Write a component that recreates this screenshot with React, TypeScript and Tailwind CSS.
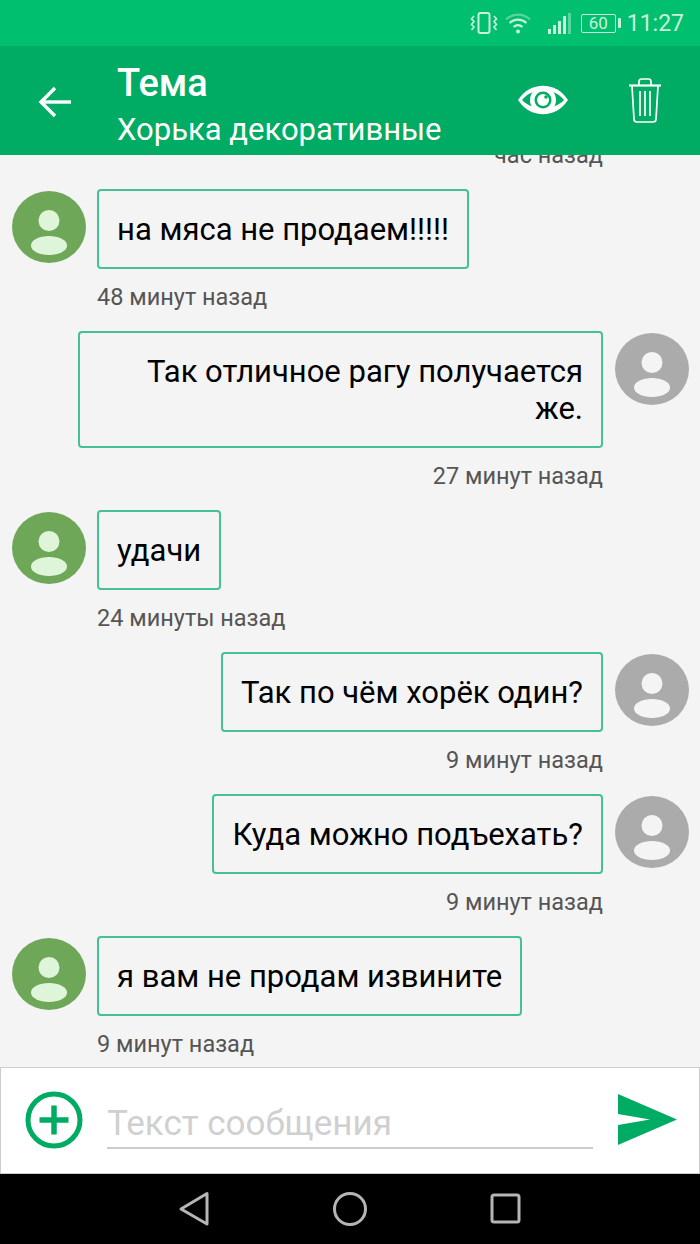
import React from "react";

type Msg = { text: string; time: string; mine?: boolean; wide?: boolean };

const messages: Msg[] = [
  { text: "на мяса не продаем!!!!!", time: "48 минут назад" },
  { text: "Так отличное рагу получается же.", time: "27 минут назад", mine: true, wide: true },
  { text: "удачи", time: "24 минуты назад" },
  { text: "Так по чём хорёк один?", time: "9 минут назад", mine: true },
  { text: "Куда можно подъехать?", time: "9 минут назад", mine: true },
  { text: "я вам не продам извините", time: "9 минут назад" },
];

function Avatar({ mine }: { mine?: boolean }) {
  return (
    <svg width="74" height="72" viewBox="0 0 74 72" className="shrink-0 mt-[2px]">
      <ellipse cx="37" cy="36" rx="37" ry="36" fill={mine ? "#ababab" : "#6fa759"} />
      <circle cx="37" cy="29.5" r="10.5" fill={mine ? "#f4f4f4" : "#dff5da"} />
      <ellipse cx="37" cy="54.5" rx="18" ry="9.5" fill={mine ? "#f4f4f4" : "#dff5da"} />
    </svg>
  );
}

function Message({ msg }: { msg: Msg }) {
  const bubble = (
    <div
      className={`border-2 border-[#45c195] rounded-[4px] px-[18px] pt-[20px] pb-[19px] text-[31px] leading-[37px] text-black ${
        msg.wide ? "w-[525px] text-right" : ""
      }`}
    >
      {msg.text}
    </div>
  );
  if (msg.mine) {
    return (
      <div className="mb-[20px]">
        <div className="flex justify-end pr-[11px] gap-[12px]">
          {bubble}
          <Avatar mine />
        </div>
        <div className="mt-[14px] pr-[97px] text-right text-[23.5px] leading-[28px] text-[#555555]">{msg.time}</div>
      </div>
    );
  }
  return (
    <div className="mb-[20px]">
      <div className="flex pl-[12px] gap-[11px]">
        <Avatar />
        {bubble}
      </div>
      <div className="mt-[14px] pl-[97px] text-[23.5px] leading-[28px] text-[#555555]">{msg.time}</div>
    </div>
  );
}

function StatusBar() {
  const c = "#c9f0dc";
  return (
    <div className="h-[46px] bg-[#00bf6f] flex items-center justify-end pr-[16px] shrink-0">
      <svg width="28" height="22" viewBox="0 0 28 22" fill="none" stroke={c} strokeWidth="1.6" className="mr-[7px]">
        <rect x="8.5" y="1" width="11" height="20" rx="2" strokeWidth="2" />
        <path d="M4 4 L1.5 7 L4 9.5 L1.5 12.5 L4 15 L1.5 18" />
        <path d="M24 4 L26.5 7 L24 9.5 L26.5 12.5 L24 15 L26.5 18" />
      </svg>
      <svg width="26" height="21" viewBox="0 0 26 21" fill="none" stroke={c} strokeWidth="2.2" className="mr-[17px]">
        <path d="M1 6.5 C8 0 18 0 25 6.5" strokeOpacity="0.45" />
        <path d="M4.5 10 C9.5 5.5 16.5 5.5 21.5 10" />
        <path d="M8.5 14 C11.5 11.5 14.5 11.5 17.5 14" />
        <circle cx="13" cy="18.5" r="2" fill={c} stroke="none" />
      </svg>
      <svg width="23" height="21" viewBox="0 0 23 21" fill={c} className="mr-[10px]">
        <rect x="0" y="16" width="3" height="5" />
        <rect x="5" y="12" width="3" height="9" />
        <rect x="10" y="8" width="3" height="13" />
        <rect x="15" y="3" width="3" height="18" />
        <rect x="20" y="0" width="3" height="21" opacity="0.45" />
      </svg>
      <div className="w-[35px] h-[19px] border border-[#c9f0dc] rounded-[2px] flex items-center justify-center text-[17px] leading-none text-[#c9f0dc]">
        60
      </div>
      <div className="w-[3px] h-[10px] bg-[#c9f0dc] ml-[2px] mr-[6px] rounded-[1px]" />
      <div className="text-[23px] leading-none text-[#c9f0dc]">11:27</div>
    </div>
  );
}

function Header() {
  return (
    <div className="h-[109px] bg-[#00ab63] flex items-center shrink-0 pl-[38px] pr-[38px] text-white relative z-10">
      <svg width="34" height="32" viewBox="0 0 34 32" fill="none" stroke="white" strokeWidth="3.4" className="mt-[2px]">
        <path d="M33 16 H3" />
        <path d="M17 2 L3 16 L17 30" />
      </svg>
      <div className="ml-[45px] flex-1 mt-[3px]">
        <div className="text-[38px] leading-[44px] font-medium">Тема</div>
        <div className="text-[31px] leading-[38px] mt-[6px] mb-[-6px]">Хорька декоративные</div>
      </div>
      <svg width="50" height="30" viewBox="0 0 50 30" className="mt-[-1px] mr-[60px]">
        <path d="M0 15 C12 -4 38 -4 50 15 C38 34 12 34 0 15 Z" fill="white" />
        <path d="M4 15 C14 2 36 2 46 15 C36 26 14 26 4 15 Z" fill="#00ab63" />
        <circle cx="25" cy="15" r="13" fill="white" />
        <circle cx="25" cy="15" r="8.5" fill="#00ab63" />
        <circle cx="25" cy="15" r="6" fill="white" />
        <circle cx="28" cy="12" r="1.8" fill="#00ab63" />
      </svg>
      <svg width="34" height="45" viewBox="0 0 34 45" fill="none" stroke="white" strokeWidth="1.7" className="mt-[-1px]">
        <path d="M1 7.5 H33" strokeWidth="2.2" />
        <path d="M11 7 V3.5 C11 2 12 1 13.5 1 H20.5 C22 1 23 2 23 3.5 V7" />
        <path d="M4 8 L6 41 C6 43 7 44 9 44 H25 C27 44 28 43 28 41 L30 8" />
        <path d="M12 13 V38" />
        <path d="M17 13 V38" />
        <path d="M22 13 V38" />
      </svg>
    </div>
  );
}

function InputBar() {
  return (
    <div className="h-[107px] shrink-0 bg-white border border-[#cccccc] flex items-center pl-[24px] pr-[21px]">
      <svg width="58" height="58" viewBox="0 0 58 58" fill="none" stroke="#00ab63" className="shrink-0 mt-[-1px]">
        <circle cx="29" cy="29" r="26" strokeWidth="5" />
        <path d="M14.5 29 H43.5" strokeWidth="5.5" />
        <path d="M29 14.5 V43.5" strokeWidth="5.5" />
      </svg>
      <div className="ml-[24px] w-[486px] h-[44px] mt-[13px] border-b-2 border-[#cccccc] text-[35px] leading-[38px] text-[#d0d0d0]">
        Текст сообщения
      </div>
      <svg width="60" height="52" viewBox="0 0 60 52" className="ml-[25px] mt-[-1px]">
        <polygon points="0,0 59,25.5 0,51 0,31 32,25.5 0,20" fill="#00ab63" />
      </svg>
    </div>
  );
}

function NavBar() {
  return (
    <div className="h-[70px] bg-black shrink-0 flex items-center">
      <svg width="700" height="70" viewBox="0 0 700 70" fill="none" stroke="#b5b5b5" strokeWidth="3" strokeLinejoin="round">
        <polygon points="181,35 207,19.5 207,50" />
        <circle cx="350" cy="35" r="15.5" />
        <rect x="492" y="21" width="27" height="27" rx="2" />
      </svg>
    </div>
  );
}

export default function App() {
  return (
    <div className="w-[700px] h-[1244px] flex flex-col overflow-hidden bg-[#f4f4f4] font-['Roboto',sans-serif]">
      <StatusBar />
      <Header />
      <div className="flex-1 overflow-hidden">
        <div className="mt-[-14px] mb-[20px] pr-[97px] text-right text-[23.5px] leading-[28px] text-[#555555]">час назад</div>
        {messages.map((m, i) => (
          <Message key={i} msg={m} />
        ))}
      </div>
      <InputBar />
      <NavBar />
    </div>
  );
}
